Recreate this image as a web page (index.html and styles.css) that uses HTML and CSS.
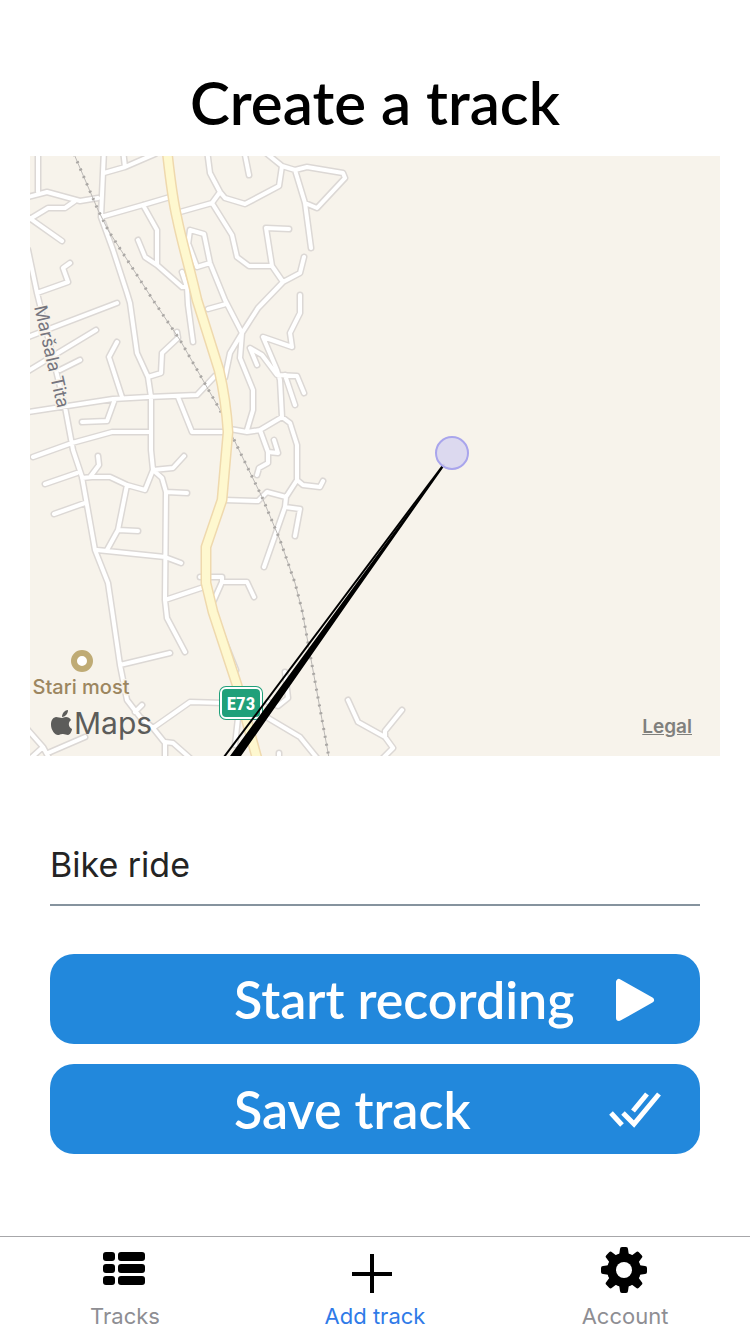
FILE: index.html
```html
<!DOCTYPE html>
<html lang="en">
<head>
<meta charset="utf-8">
<meta name="viewport" content="width=device-width, initial-scale=1">
<title>Create a track</title>
<link rel="stylesheet" href="styles.css">
</head>
<body>
<main class="screen">
  <h1 class="title">Create a track</h1>

  <section class="map" aria-label="Map">
    <svg class="map-canvas" viewBox="30 156 690 600" role="img" aria-label="Recorded route">
      <defs>
        <path id="roads" d="M38 150V192 M28 197L47 192L80 201L98 198 M28 220L48 208H65L75 201 M28 217L62 241
          M104 150L101 217L113 250L127 293L130 303L137 353L148 377L151 397V450L153 470
          M104 173L125 167L155 154 M123 150L125 167 M101 217L143 205L170 197 M143 205L157 230V264
          M138 240L145 257L157 265L182 287L187 287L188 305L193 342 M182 272L187 287
          M180 212L212 203L220 192 M188 245L190 230L204 234L210 263L225 300L242 333 M188 243L197 267L210 263 M208 309L226 304
          M207 150L210 173L220 192L225 198L245 204L279 186L282 166L266 153
          M212 203L232 235L237 257L249 266H272L266 228L289 229 M272 266L283 282L300 273L304 257
          M283 282L258 308L242 333L230 353L225 377 M244 150L249 175
          M282 166L295 170L307 167L343 173L345 178L317 208L305 203 M295 170L305 203L311 248
          M300 295V313L290 333L292 347L263 337L277 370L280 380L282 417
          M242 333L240 358L253 390V410L247 430 M257 365L250 348L262 355L277 375L297 376L304 393 M285 375L295 405
          M215 376L197 395L148 397L113 399L28 412 M178 397L192 432H226
          M230 429L247 432L260 430L282 417L290 423L297 445V480L303 485L320 487L323 481
          M297 480L286 497L267 492L258 501L224 500 M286 497L285 507L264 567 M285 507L300 509L295 536
          M260 430L268 452L278 453L274 440 M268 452V463L259 468L257 475
          M28 337L117 303 M28 371L96 330 M60 370L80 360 M117 342L109 357L122 397 M115 399L107 421L82 422
          M177 332L178 338L162 353L161 373L148 377 M33 457L72 443L112 432H151
          M28 250L37 293L65 407L73 450L82 477L95 550L108 583L112 610L120 665L127 700L140 717L153 728L165 743V760
          M37 293L68 282L63 268L70 263 M45 484L77 473 M54 514L85 503
          M82 478L92 477H110L127 485L145 490L153 470 M90 477L99 465L98 456 M153 470L173 468L184 456
          M153 470L162 478L166 492L165 600L167 618L185 652 M166 492L187 493 M127 485L118 530L107 550 M118 530L138 531
          M97 550L165 557L181 563 M165 600L204 587 M200 577L222 577V582H247L254 597 M222 582L214 600
          M120 665L170 653 M135 712L142 705 M153 728L190 702L225 703 M165 742L173 743L190 758
          M28 730L43 747L49 758 M32 757L43 747 M48 753L85 737
          M348 700L358 722L385 737L393 748L383 758 M385 737V731L402 710
          M218 625L236 670 M263 715L300 737L317 758 M285 672L288 698L278 706L268 702 M238 718L235 745 M279 753V760"/>
        <path id="highway" d="M167 150C170 178 173 201 177 218C182 243 190 269 197 300L219 370Q226 400 228 432L222 500L206 547V583L213 612L237 685L258 762"/>
        <path id="rail" d="M74 154L98 210L108 230L153 300L180 340L220 410L238 448L262 497L280 540L295 583L302 610L329 758"/>
      </defs>
      <rect x="30" y="156" width="690" height="600" class="land"/>
      <use href="#roads" class="road-edge"/>
      <use href="#roads" class="road"/>
      <use href="#rail" class="rail"/>
      <use href="#rail" class="rail-ties"/>
      <use href="#highway" class="highway-edge"/>
      <use href="#highway" class="highway"/>

      <circle cx="82" cy="661" r="8" class="poi"/>
      <text x="81" y="694" text-anchor="middle" class="poi-label">Stari most</text>
      <text transform="translate(34 307) rotate(77)" class="street-label">Maršala Tita</text>

      <rect x="219" y="686" width="44" height="34" rx="7" class="shield"/>
      <rect x="221" y="688" width="40" height="30" rx="5" class="shield-line"/>
      <text x="241" y="710" text-anchor="middle" class="shield-text">E73</text>

      <path class="route" d="M444 464L328 622L230 756H241L352 597L445 465Z"/>
      <path class="route-line" d="M444 464L224 757"/>
      <circle cx="452" cy="453" r="16" class="position"/>

      <g class="brand">
        <path d="M68 710C65 710 62 713 62 717C65 717 68 714 68 710Z"/>
        <path d="M62 718C60 718 58 717 56 717C52 718 51 721 51 725C51 730 55 735 58 735C60 735 60 734 63 734C65 734 66 735 68 735C70 735 72 731 72 729C68 727 68 722 71 720C70 718 68 717 66 717C64 717 63 718 62 718Z"/>
        <text x="74" y="734" class="brand-text">Maps</text>
      </g>
    </svg>
    <a class="legal" href="#legal">Legal</a>
  </section>

  <form class="form">
    <input class="name" type="text" value="Bike ride" aria-label="Track name">
    <button class="action" type="button">
      <span>Start recording</span>
      <svg class="action-icon" viewBox="0 0 54 54" aria-hidden="true"><path d="M11 10V46L43 28Z" fill="currentColor" stroke="currentColor" stroke-width="6" stroke-linejoin="round"/></svg>
    </button>
    <button class="action" type="button">
      <span>Save track</span>
      <svg class="action-icon" viewBox="0 0 54 54" aria-hidden="true"><path d="M3 31L14 43M15 31L26 42L51 12M25 29L39 12" fill="none" stroke="currentColor" stroke-width="5"/></svg>
    </button>
  </form>
</main>

<nav class="tabs" aria-label="Main">
  <a class="tab" href="#tracks">
    <svg class="tab-icon" viewBox="0 0 50 50" aria-hidden="true"><g fill="currentColor"><rect x="3" y="6" width="12" height="9" rx="3"/><rect x="18" y="6" width="27" height="9" rx="3"/><rect x="3" y="18" width="12" height="9" rx="3"/><rect x="18" y="18" width="27" height="9" rx="3"/><rect x="3" y="30" width="12" height="9" rx="3"/><rect x="18" y="30" width="27" height="9" rx="3"/></g></svg>
    <span>Tracks</span>
  </a>
  <a class="tab tab-active" href="#add" aria-current="page">
    <svg class="tab-icon" viewBox="0 0 50 50" aria-hidden="true"><path d="M22 8V47M2 28H42" stroke="currentColor" stroke-width="4"/></svg>
    <span>Add track</span>
  </a>
  <a class="tab" href="#account">
    <svg class="tab-icon" viewBox="0 0 50 50" aria-hidden="true">
      <g fill="currentColor">
        <path id="teeth" d="M19 10L20 3Q20 1 22 1H26Q28 1 28 3L29 10V38L28 45Q28 47 26 47H22Q20 47 20 45L19 38Z"/>
        <use href="#teeth" transform="rotate(45 24 24)"/><use href="#teeth" transform="rotate(90 24 24)"/><use href="#teeth" transform="rotate(135 24 24)"/>
        <circle cx="24" cy="24" r="17"/>
      </g>
      <circle cx="24" cy="24" r="8" fill="#fff"/>
    </svg>
    <span>Account</span>
  </a>
</nav>
</body>
</html>
```
FILE: styles.css
```css
* { box-sizing: border-box; }

body {
  margin: 0;
  min-height: 100vh;
  display: flex;
  flex-direction: column;
  background: #fff;
  color: #000;
  font-family: Inter, "Liberation Sans", sans-serif;
}

.screen {
  flex: 1;
  display: flex;
  flex-direction: column;
  padding: 70px 30px 40px;
}

.title {
  margin: 0 0 22px;
  font: 600 60px/64px Lato, "Open Sans", sans-serif;
  text-align: center;
}

.map { position: relative; }
.map-canvas { display: block; width: 100%; }

.land { fill: #f7f3eb; }
.road, .road-edge, .highway, .highway-edge, .rail, .rail-ties {
  fill: none;
  stroke-linecap: round;
  stroke-linejoin: round;
}
.road-edge { stroke: #dcd8d5; stroke-width: 7; }
.road { stroke: #fff; stroke-width: 4; }
.highway-edge { stroke: #efd9ad; stroke-width: 11; }
.highway { stroke: #fef8cf; stroke-width: 8; }
.rail { stroke: #bcb9b6; stroke-width: 1; }
.rail-ties { stroke: #aaa7a4; stroke-width: 3; stroke-dasharray: 2 6; stroke-linecap: butt; }

.poi { fill: #fff; stroke: #bfab75; stroke-width: 6; }
.poi-label {
  fill: #9c8660;
  font-size: 20px;
  font-weight: 500;
  stroke: #f7f3eb;
  stroke-width: 3;
  paint-order: stroke;
}
.street-label {
  fill: #75757e;
  font-size: 18px;
  stroke: #f7f3eb;
  stroke-width: 3;
  paint-order: stroke;
}

.shield { fill: #20a07a; }
.shield-line { fill: #20a07a; stroke: #fff; stroke-width: 2; }
.shield-text {
  fill: #fff;
  font-family: "Roboto Condensed", "Liberation Sans Narrow", Roboto, sans-serif;
  font-size: 19px;
  font-weight: 700;
}

.route-line { stroke: #000; stroke-width: 2; }
.position { fill: #dad7ef; fill-opacity: .95; stroke: #a9a5ec; stroke-width: 2; }
.brand { fill: #5c5c5a; }
.brand-text { font-size: 30px; }

.legal {
  position: absolute;
  right: 28px;
  bottom: 17px;
  color: #80807d;
  font-size: 19px;
  font-weight: 600;
  line-height: 24px;
}

.form {
  display: flex;
  flex-direction: column;
  gap: 20px;
  padding: 68px 20px 0;
}

.name {
  width: 100%;
  height: 82px;
  margin-bottom: 28px;
  padding: 0;
  border: 0;
  border-bottom: 2px solid #86939e;
  border-radius: 0;
  background: transparent;
  color: #242424;
  font: 400 34px/44px Inter, "Liberation Sans", sans-serif;
  outline: 0;
}

.action {
  display: flex;
  align-items: center;
  justify-content: space-between;
  height: 90px;
  padding: 0 38px 0 184px;
  border: 0;
  border-radius: 24px;
  background: #2288dc;
  color: #fff;
  font: 600 52px/60px Lato, "Open Sans", sans-serif;
  white-space: nowrap;
}
.action-icon { width: 54px; height: 54px; }

.tabs {
  display: grid;
  grid-template-columns: repeat(3, 1fr);
  border-top: 1px solid #a7a7aa;
}
.tab {
  display: flex;
  flex-direction: column;
  align-items: center;
  gap: 7px;
  padding: 9px 0 4px;
  color: #8e8e93;
  font-size: 22px;
  line-height: 27px;
  text-decoration: none;
}
.tab-active { color: #2f7be8; }
.tab-icon { width: 50px; height: 50px; color: #000; }
```
